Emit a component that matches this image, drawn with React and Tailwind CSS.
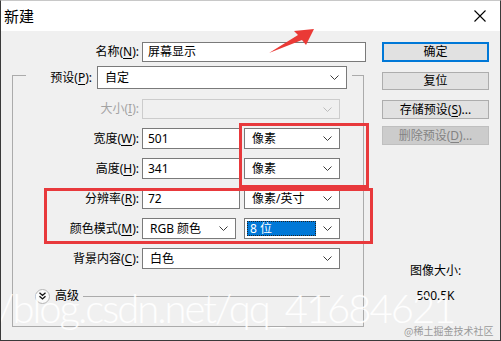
import React from "react";

const Chevron = ({ color = "#3c3c3c" }) => (
  <svg width="9" height="5" viewBox="0 0 9 5" className="shrink-0">
    <path d="M0.5 0.5 L4.5 4.5 L8.5 0.5" stroke={color} fill="none" strokeWidth="1" />
  </svg>
);

const U = ({ children }) => <span className="underline underline-offset-2">{children}</span>;

const Label = ({ className, children }) => (
  <div className={"text-right whitespace-nowrap leading-[16px] " + className}>{children}</div>
);

const Input = ({ className, children }) => (
  <div className={"h-full flex items-center bg-white border border-[#7a7a7a] pl-[5px] leading-[16px] " + className}>
    {children}
  </div>
);

const Select = ({ className, children }) => (
  <div className={"h-full flex items-center justify-between bg-white border border-[#7a7a7a] pl-[7px] pr-[7px] leading-[16px] " + className}>
    <div className="flex items-center">{children}</div>
    <Chevron />
  </div>
);

export default function App() {
  return (
    <div className="relative w-[501px] h-[341px] overflow-hidden bg-[#f0f0f0] border border-[#3a3a3a] border-t-[#c8c8c8] text-[12px] text-black font-['Noto_Sans','Noto_Sans_CJK_SC',sans-serif]">
      {/* title bar */}
      <div className="h-[30px] bg-white flex items-center justify-between pl-[3px] pr-[14px]">
        <div className="text-[15px] leading-[18px]">新建</div>
        <svg width="12" height="12" viewBox="0 0 12 12">
          <path d="M0.5 0.5 L11.5 11.5 M11.5 0.5 L0.5 11.5" stroke="#000" strokeWidth="1.1" fill="none" />
        </svg>
      </div>

      {/* body */}
      <div className="flex pt-[11px]">
        {/* left column */}
        <div className="w-[371px] flex flex-col">
          <div className="flex items-center h-[20px]">
            <Label className="w-[138px]">
              名称(<U>N</U>):
            </Label>
            <Input className="ml-[3px] w-[224px]">屏幕显示</Input>
          </div>

          <div className="mt-[13px] ml-[11px] w-[352px] h-[252px] border border-[#ababab] flex flex-col">
            {/* preset row overlaps the top border */}
            <div className="-mt-[10px] ml-[13px] w-[326px] h-[23px] bg-[#f0f0f0] flex items-center">
              <Label className="w-[66px]">
                预设(<U>P</U>):
              </Label>
              <Select className="ml-[5px] w-[250px]">自定</Select>
            </div>

            <div className="mt-[10px] flex items-center h-[20px]">
              <Label className="w-[126px] text-[#a3a3a3]">
                大小(<U>I</U>):
              </Label>
              <div className="ml-[3px] w-[198px] h-full flex items-center justify-end pr-[7px] bg-[#f0f0f0] border border-[#cccccc]">
                <Chevron color="#bcbcbc" />
              </div>
            </div>

            <div className="mt-[9px] flex items-center h-[21px]">
              <Label className="w-[126px]">
                宽度(<U>W</U>):
              </Label>
              <Input className="ml-[3px] w-[98px]">501</Input>
              <Select className="ml-[4px] w-[96px]">像素</Select>
            </div>

            <div className="mt-[9px] flex items-center h-[21px]">
              <Label className="w-[126px]">
                高度(<U>H</U>):
              </Label>
              <Input className="ml-[3px] w-[98px]">341</Input>
              <Select className="ml-[4px] w-[96px]">像素</Select>
            </div>

            <div className="mt-[9px] flex items-center h-[21px]">
              <Label className="w-[126px]">
                分辨率(<U>R</U>):
              </Label>
              <Input className="ml-[3px] w-[98px]">72</Input>
              <Select className="ml-[4px] w-[96px]">像素/英寸</Select>
            </div>

            <div className="mt-[9px] flex items-center h-[21px]">
              <Label className="w-[126px]">
                颜色模式(<U>M</U>):
              </Label>
              <Select className="ml-[3px] w-[94px] pl-[5px]">RGB 颜色</Select>
              <div className="ml-[8px] w-[96px] h-full flex items-center justify-between bg-white border border-[#7a7a7a] pl-[2px] pr-[7px]">
                <div className="w-[69px] h-[15px] bg-[#0078d7] text-white border border-dotted border-[#222] flex items-center pl-[2px] leading-[14px]">
                  8 位
                </div>
                <Chevron />
              </div>
            </div>

            <div className="mt-[9px] flex items-center h-[21px]">
              <Label className="w-[126px]">
                背景内容(<U>C</U>):
              </Label>
              <Select className="ml-[3px] w-[198px]">白色</Select>
            </div>

            <div className="mt-[19px] ml-[22px] flex items-center h-[16px]">
              <div className="w-[15px] h-[15px] rounded-full border border-[#b5b5b5] bg-[#fafafa] flex items-center justify-center">
                <svg width="7" height="8" viewBox="0 0 7 8">
                  <path d="M0.5 0.8 L3.5 3.5 L6.5 0.8 M0.5 4.3 L3.5 7 L6.5 4.3" stroke="#111" strokeWidth="1.3" fill="none" />
                </svg>
              </div>
              <div className="ml-[5px] leading-[16px]">高级</div>
              <div className="ml-[4px] w-[247px] h-px bg-[#ababab]" />
            </div>
          </div>
        </div>

        {/* right column */}
        <div className="ml-[10px] w-[107px] flex flex-col items-center">
          <div className="w-full h-[20px] border-2 border-[#0078d7] bg-[#e1e1e1] flex items-center justify-center leading-[16px]">
            确定
          </div>
          <div className="mt-[10px] w-full h-[18px] border border-[#adadad] bg-[#e1e1e1] flex items-center justify-center leading-[16px]">
            复位
          </div>
          <div className="mt-[10px] w-full h-[19px] border border-[#adadad] bg-[#e1e1e1] flex items-center justify-center leading-[16px]">
            存储预设(<U>S</U>)...
          </div>
          <div className="mt-[7px] w-full h-[19px] border border-[#bfbfbf] bg-[#cccccc] text-[#838383] flex items-center justify-center leading-[16px]">
            删除预设(<U>D</U>)...
          </div>
          <div className="mt-[118px] leading-[16px]">图像大小:</div>
          <div className="mt-[9px] leading-[16px]">500.5K</div>
        </div>
      </div>

      {/* annotations over the screenshot */}
      <div className="absolute left-[238px] top-[122px] w-[130px] h-[65px] border-[3px] border-[#e8393c]" />
      <div className="absolute left-[43px] top-[187px] w-[329px] h-[56px] border-[3px] border-[#e8393c]" />
      <svg className="absolute left-0 top-0" width="501" height="60" viewBox="0 0 501 60">
        <polygon points="268,52 297,34 293,30 313,28 305,44 301,39" fill="#ea3a36" />
      </svg>

      <div className="absolute left-[-4px] top-[287px] whitespace-nowrap text-[40px] leading-[40px] tracking-[-2px] font-light text-white/90 font-['Lato','Liberation_Sans',sans-serif]">
        /blog.csdn.net/qq_41684621
      </div>
      <div className="absolute left-[403px] top-[324px] whitespace-nowrap text-[10px] leading-[12px] text-[#9a9a9a] font-['Noto_Sans_CJK_SC',sans-serif]">
        @稀土掘金技术社区
      </div>
    </div>
  );
}
